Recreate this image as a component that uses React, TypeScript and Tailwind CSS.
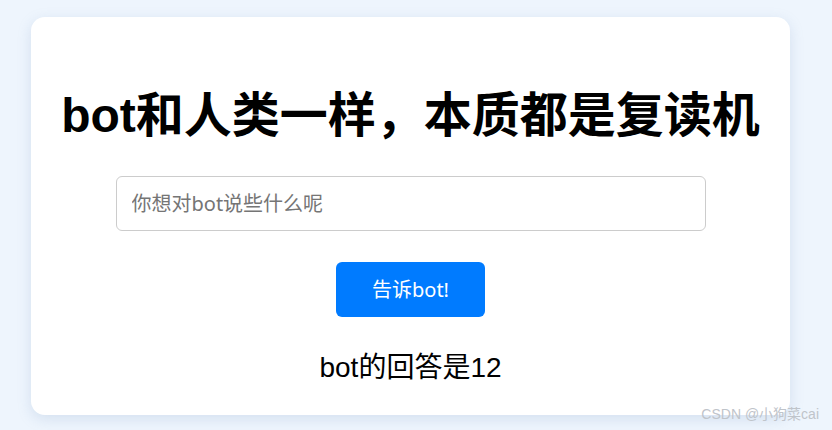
import { useState } from "react";

export default function App() {
  const [msg, setMsg] = useState("");
  const [answer] = useState("12");

  return (
    <div className="relative min-h-[430px] w-[832px] bg-[#eef5fd] pt-[17px] font-['Liberation_Sans','Noto_Sans_CJK_SC',sans-serif]">
      <div className="ml-[31px] flex w-[759px] flex-col items-center rounded-[14px] bg-white pt-[70px] pb-[31px] shadow-[0_4px_14px_rgba(120,150,190,0.22)]">
        <h1 className="h-[58px] text-[48px] leading-[58px] font-bold text-black">
          bot和人类一样，本质都是复读机
        </h1>

        <input
          value={msg}
          onChange={(e) => setMsg(e.target.value)}
          placeholder="你想对bot说些什么呢"
          className="mt-[31px] h-[55px] w-[590px] rounded-[6px] border border-[#cccccc] px-[15px] text-[20px] text-black outline-none placeholder:text-[#757575] font-['Noto_Sans','Noto_Sans_CJK_SC',sans-serif]"
        />

        <button className="mt-[31px] h-[55px] w-[149px] rounded-[6px] bg-[#007bff] text-[20px] text-white font-['Noto_Sans','Noto_Sans_CJK_SC',sans-serif]">
          告诉bot!
        </button>

        <p className="mt-[35px] text-[28px] leading-[32px] text-black">
          bot的回答是{answer}
        </p>
      </div>

      {/* watermark */}
      <span className="absolute right-[13px] bottom-[9px] text-[14px] leading-none text-[#bfc4ca]">
        CSDN @小狗菜cai
      </span>
    </div>
  );
}
